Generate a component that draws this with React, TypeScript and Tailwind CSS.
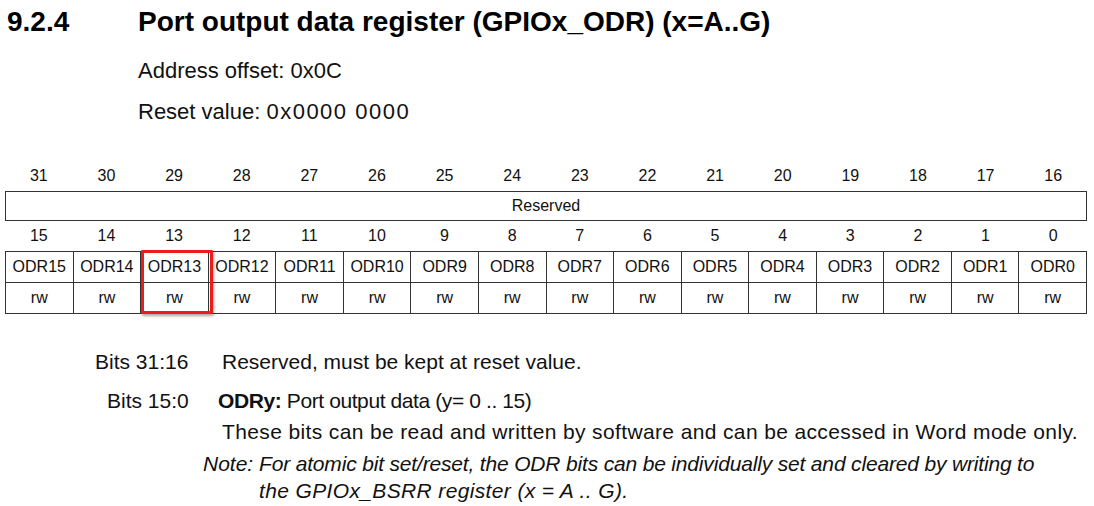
const high = Array.from({ length: 16 }, (_, i) => 31 - i);
const low = Array.from({ length: 16 }, (_, i) => 15 - i);

function NumberRow({ bits }: { bits: number[] }) {
  return (
    <div className="grid h-[30px] grid-cols-16 items-center text-center text-[16px] leading-none">
      {bits.map((b) => (
        <span key={b}>{b}</span>
      ))}
    </div>
  );
}

export default function App() {
  return (
    <div className="h-[506px] w-[1094px] overflow-hidden bg-white font-['Liberation_Sans',Arial,sans-serif] text-[#111]">
      <div className="mt-[8px] flex h-[28px] items-center pl-[7px] text-[28px] font-bold leading-none text-black">
        <span className="w-[131px]">9.2.4</span>
        <span>Port output data register (GPIOx_ODR) (x=A..G)</span>
      </div>
      <div className="mt-[21px] h-[28px] pl-[138px] text-[22px] leading-[28px]">Address offset: 0x0C</div>
      <div className="mt-[13px] h-[28px] pl-[138px] text-[22px] leading-[28px]">
        Reset value: <span className="tracking-[1.5px]">0x0000 0000</span>
      </div>

      <div className="ml-[5px] mt-[35px] w-[1082px]">
        <NumberRow bits={high} />
        <div className="flex h-[30px] items-center justify-center border border-[#333] text-[16px]">Reserved</div>
        <NumberRow bits={low} />
        <div className="relative">
          <div className="grid grid-cols-16 border-l border-t border-[#333] text-center text-[16px]">
            {low.map((b) => (
              <div key={`n${b}`} className="flex h-[31px] items-center justify-center border-b border-r border-[#333]">
                ODR{b}
              </div>
            ))}
            {low.map((b) => (
              <div key={`a${b}`} className="flex h-[31px] items-center justify-center border-b border-r border-[#333]">
                rw
              </div>
            ))}
          </div>
          <div className="absolute left-[136px] top-[-1px] h-[64px] w-[72px] rounded-[1px] border-[3px] border-[#ea1c1c] shadow-[1px_2px_3px_rgba(0,0,0,0.35)]" />
        </div>
      </div>

      <div className="mt-[33px] flex h-[30px] pl-[95px] text-[21px] leading-[30px]">
        <span className="w-[127px]">Bits 31:16</span>
        <span>Reserved, must be kept at reset value.</span>
      </div>
      <div className="mt-[9px] flex h-[30px] pl-[107px] text-[21px] leading-[30px]">
        <span className="w-[111px]">Bits 15:0</span>
        <span className="tracking-[-0.4px]">
          <b>ODRy:</b> Port output data (y= 0 .. 15)
        </span>
      </div>
      <div className="mt-[1px] h-[30px] pl-[222px] text-[21px] leading-[30px] tracking-[0.37px]">
        These bits can be read and written by software and can be accessed in Word mode only.
      </div>
      <div className="mt-[3px] flex pl-[203px] text-[21px] italic leading-[27px]">
        <span className="w-[56px] shrink-0">Note:</span>
        <div>
          <div className="tracking-[-0.17px]">For atomic bit set/reset, the ODR bits can be individually set and cleared by writing to</div>
          <div className="tracking-[0.36px]">the GPIOx_BSRR register (x = A .. G).</div>
        </div>
      </div>
    </div>
  );
}
